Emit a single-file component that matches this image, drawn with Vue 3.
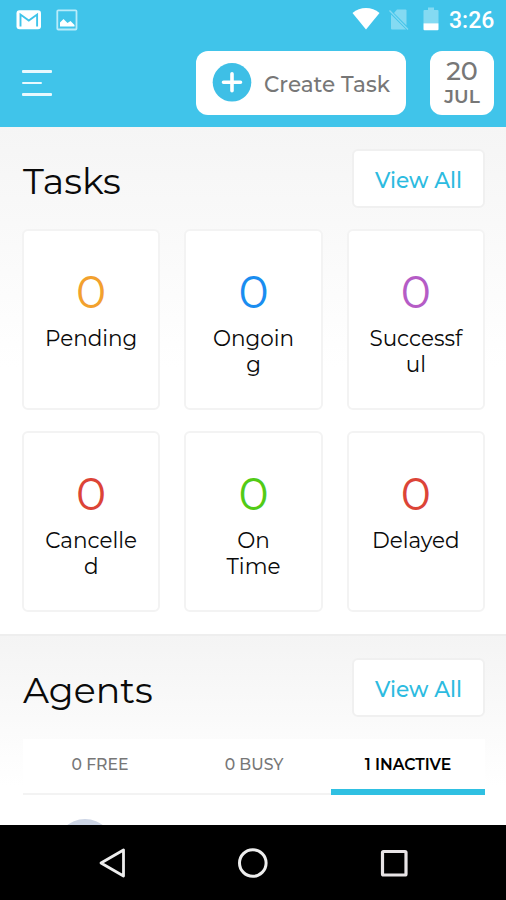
<template>
  <div class="screen">
    <header class="top">
      <div class="status-bar">
        <div class="status-group">
          <svg class="icon-mail" width="26" height="20" viewBox="0 0 26 20">
            <rect x="0.5" y="0.3" width="24.500" height="19" rx="3" fill="#fff" />
            <path d="M4.500 16.500V4.500L12.800 10.500l8.300-6v12" fill="none" stroke="#40c4ea" stroke-width="1.900" />
          </svg>
          <svg class="icon-image" width="22" height="22" viewBox="0 0 22 22">
            <rect x="1.300" y="1.300" width="19.200" height="19.200" rx="1" fill="none" stroke="#b9ecfa" stroke-width="1.800" />
            <path d="M4 17.500v-4l3.500-3.500 4 4 3-2 4 4v1.500z" fill="#fff" />
          </svg>
        </div>
        <div class="status-group">
          <svg class="icon-wifi" width="28" height="23" viewBox="0 0 28 23">
            <path d="M0.500 6C8-0.600 20-0.600 27.500 6L14 22.500z" fill="#fff" />
          </svg>
          <svg class="icon-sim" width="20" height="22" viewBox="0 0 20 22">
            <path d="M8 0.500h8.500q1 0 1 1v15L5 4z" fill="#84daf2" />
            <path d="M2 5.500l15 15H3q-1 0-1-1z" fill="#84daf2" />
            <path d="M0.500 1.500L19 20.500" stroke="#84daf2" stroke-width="1.300" />
          </svg>
          <svg class="icon-battery" width="16" height="24" viewBox="0 0 16 24">
            <path d="M1.500 3H5V0.500h6V3h3.500q1 0 1 1v12H0.500V4q0-1 1-1z" fill="#84daf2" />
            <path d="M0.500 16.200h15v6q0 1-1 1h-13q-1 0-1-1z" fill="#fff" />
          </svg>
          <span class="clock">3:26</span>
        </div>
      </div>

      <div class="toolbar">
        <button class="menu-btn" aria-label="Menu">
          <span></span>
          <span class="short"></span>
          <span></span>
        </button>
        <button class="create-btn">
          <svg width="40" height="40" viewBox="0 0 40 40">
            <circle cx="20" cy="19.300" r="19.300" fill="#3ebfe6" />
            <path d="M20 10.800v17M11.500 19.300h17" stroke="#fff" stroke-width="3.600" stroke-linecap="round" />
          </svg>
          <span>Create Task</span>
        </button>
        <button class="date-btn">
          <span class="day">20</span>
          <span class="month">JUL</span>
        </button>
      </div>
    </header>

    <section class="section tasks">
      <div class="section-header">
        <h2>Tasks</h2>
        <button class="view-btn">View All</button>
      </div>
      <div class="task-grid">
        <div v-for="task in tasks" :key="task.id" class="task-card">
          <div class="count" :class="task.id">{{ task.count }}</div>
          <div class="label">{{ task.label }}</div>
        </div>
      </div>
    </section>

    <section class="section agents">
      <div class="section-header">
        <h2>Agents</h2>
        <button class="view-btn">View All</button>
      </div>
      <div class="tabs">
        <button
          v-for="tab in tabs"
          :key="tab"
          :class="['tab', { active: activeTab === tab }]"
          @click="activeTab = tab"
        >
          {{ tab }}
        </button>
      </div>
      <div class="agent-row">
        <div class="avatar"></div>
      </div>
    </section>

    <nav class="nav-bar">
      <svg width="32" height="32" viewBox="0 0 32 32">
        <path d="M27.500 3v26L5 16z" fill="none" stroke="#eee" stroke-width="2.800" stroke-linejoin="round" />
      </svg>
      <svg width="32" height="32" viewBox="0 0 32 32">
        <circle cx="15.800" cy="16" r="13.300" fill="none" stroke="#eee" stroke-width="3" />
      </svg>
      <svg width="32" height="32" viewBox="0 0 32 32">
        <rect x="4.500" y="4.500" width="23.500" height="23.500" rx="1" fill="none" stroke="#e8e4e6" stroke-width="3.200" />
      </svg>
    </nav>
  </div>
</template>

<script setup>
import { ref } from 'vue';

const tasks = ref([
  { id: 'pending', count: 0, label: 'Pending' },
  { id: 'ongoing', count: 0, label: 'Ongoing' },
  { id: 'successful', count: 0, label: 'Successful' },
  { id: 'cancelled', count: 0, label: 'Cancelled' },
  { id: 'on-time', count: 0, label: 'On Time' },
  { id: 'delayed', count: 0, label: 'Delayed' },
]);

const tabs = ['0 FREE', '0 BUSY', '1 INACTIVE'];
const activeTab = ref('1 INACTIVE');
</script>

<style>
body {
  margin: 0;
}
</style>

<style scoped>
.screen {
  width: 506px;
  height: 900px;
  display: flex;
  flex-direction: column;
  overflow: hidden;
  background: #fff;
  font-family: Montserrat, Inter, sans-serif;
  color: #0a0a0a;
}

.screen * {
  box-sizing: border-box;
}

button {
  margin: 0;
  padding: 0;
  border: none;
  background: none;
  font-family: inherit;
  white-space: nowrap;
}

svg {
  display: block;
  flex: none;
}

.top {
  flex: none;
  height: 127px;
  background: #40c4ea;
}

.status-bar {
  height: 40px;
  padding: 0 12px 0 16px;
  display: flex;
  justify-content: space-between;
}

.status-group {
  display: flex;
  align-items: flex-start;
}

.icon-mail {
  margin-top: 10px;
}

.icon-image {
  margin: 9px 0 0 14px;
}

.icon-wifi {
  margin-top: 7px;
}

.icon-sim {
  margin: 9px 0 0 9px;
}

.icon-battery {
  margin: 7px 0 0 14px;
}

.clock {
  margin-left: 10px;
  width: 45px;
  font-family: Roboto, sans-serif;
  font-size: 23px;
  font-weight: 500;
  line-height: 41px;
  color: #fff;
}

.toolbar {
  display: flex;
  align-items: center;
  height: 86px;
  padding: 0 12px 0 22px;
}

.menu-btn {
  display: flex;
  flex-direction: column;
  gap: 9px;
  margin-right: auto;
}

.menu-btn span {
  width: 30px;
  height: 2.5px;
  border-radius: 1px;
  background: #e8f9fe;
}

.menu-btn .short {
  width: 20px;
}

.create-btn {
  width: 210px;
  height: 64px;
  padding-left: 16px;
  display: flex;
  align-items: center;
  gap: 12px;
  border-radius: 12px;
  background: #fff;
  font-size: 21.5px;
  font-weight: 500;
  line-height: 28px;
  color: #777;
}

.create-btn span {
  padding-top: 1px;
}

.date-btn {
  width: 64px;
  height: 64px;
  margin-left: 24px;
  display: flex;
  flex-direction: column;
  align-items: center;
  justify-content: center;
  border-radius: 12px;
  background: #fff;
  color: #777;
  font-weight: 500;
}

.day {
  font-size: 25.5px;
  line-height: 27px;
}

.month {
  font-size: 18.5px;
  font-weight: 600;
  line-height: 25px;
}

.section {
  padding: 0 21px 0 23px;
}

.tasks {
  flex: none;
  height: 507px;
  padding-top: 22px;
  background: linear-gradient(#f5f5f5, #fff 240px);
}

.agents {
  flex: 1;
  min-height: 0;
  padding-top: 22px;
  overflow: hidden;
  border-top: 2px solid #eee;
  background: linear-gradient(#f4f4f4, #fff 150px);
}

.section-header {
  display: flex;
  justify-content: space-between;
  height: 59px;
}

h2 {
  margin: 0;
  font-size: 36.3px;
  font-weight: 400;
  line-height: 65px;
}

.view-btn {
  width: 133px;
  height: 59px;
  padding-top: 3px;
  border: 2px solid #f0f0f0;
  border-radius: 6px;
  background: #fff;
  font-size: 21.6px;
  font-weight: 500;
  color: #2cbbe0;
}

.task-grid {
  margin: 21px 0 0 -1px;
  display: grid;
  grid-template-columns: repeat(3, 1fr);
  gap: 21px 24px;
}

.task-card {
  height: 181px;
  padding: 38px 20px 0;
  border: 2px solid #f3f3f3;
  border-radius: 6px;
  background: #fff;
  text-align: center;
}

.count {
  font-size: 45.5px;
  font-weight: 400;
  line-height: 45px;
}

.pending { color: #f2a12e; }
.ongoing { color: #1a8df0; }
.successful { color: #b55cc6; }
.cancelled, .delayed { color: #dc4437; }
.on-time { color: #52cb16; }

.label {
  margin-top: 11px;
  font-size: 21.5px;
  line-height: 26px;
  overflow-wrap: anywhere;
}

/* keeps the second word on its own line */
.on-time + .label {
  padding: 0 8px;
}

.tabs {
  display: grid;
  grid-template-columns: repeat(3, 1fr);
  height: 56px;
  margin-top: 22px;
  border-bottom: 2px solid #f3f3f3;
  background: #fff;
}

.tab {
  height: 56px;
  padding-bottom: 5px;
  font-size: 15.7px;
  font-weight: 500;
  color: #777;
}

.tab.active {
  padding-bottom: 0;
  border-bottom: 6px solid #2fc0e2;
  font-weight: 600;
  color: #000;
}

.agent-row {
  padding: 24px 0 0 33px;
}

.avatar {
  width: 58px;
  height: 58px;
  border-radius: 50%;
  background: #cdd5e5;
}

.nav-bar {
  flex: none;
  height: 75px;
  display: flex;
  align-items: center;
  justify-content: center;
  gap: 109px;
  background: #000;
}
</style>
